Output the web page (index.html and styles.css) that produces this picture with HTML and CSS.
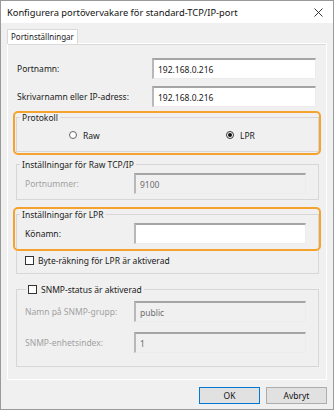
FILE: index.html
```html
<!DOCTYPE html>
<html lang="sv">
<head>
    <meta charset="UTF-8">
    <meta name="viewport" content="width=device-width, initial-scale=1.0">
    <title>Konfigurera portövervakare</title>
    <link rel="stylesheet" href="styles.css">
</head>
<body>
<div class="dialog">
    <div class="titlebar">
        <span class="title">Konfigurera portövervakare för standard-TCP/IP-port</span>
        <svg class="close" width="9" height="9" viewBox="0 0 9 9">
            <path d="M0.5 0.5 L8.5 8.5 M8.5 0.5 L0.5 8.5" stroke="#222" stroke-width="0.9" fill="none"/>
        </svg>
    </div>
    <div class="content">
        <div class="tabs"><div class="tab">Portinställningar</div></div>
        <div class="panel">
            <div class="row">
                <label for="portname">Portnamn:</label>
                <input class="text" id="portname" type="text" value="192.168.0.216">
            </div>
            <div class="row second">
                <label for="address">Skrivarnamn eller IP-adress:</label>
                <input class="text" id="address" type="text" value="192.168.0.216">
            </div>

            <div class="group proto">
                <div class="group-title">Protokoll</div>
                <div class="radios">
                    <label class="radio"><span class="dot"></span>Raw</label>
                    <label class="radio"><span class="dot checked"></span>LPR</label>
                </div>
                <div class="mark mark-proto"></div>
            </div>

            <div class="group raw">
                <div class="group-title">Inställningar för Raw TCP/IP</div>
                <div class="field">
                    <span class="off">Portnummer:</span>
                    <input class="text disabled" type="text" value="9100" disabled>
                </div>
            </div>

            <div class="group lpr">
                <div class="group-title">Inställningar för LPR</div>
                <div class="field">
                    <label for="queue">Könamn:</label>
                    <input class="text" id="queue" type="text" value="">
                </div>
                <label class="check"><span class="box"></span>Byte-räkning för LPR är aktiverad</label>
                <div class="mark mark-lpr"></div>
            </div>

            <div class="group snmp">
                <label class="group-title check-title"><span class="box"></span>SNMP-status är aktiverad</label>
                <div class="field">
                    <span class="off">Namn på SNMP-grupp:</span>
                    <input class="text disabled" type="text" value="public" disabled>
                </div>
                <div class="field next">
                    <span class="off">SNMP-enhetsindex:</span>
                    <input class="text disabled" type="text" value="1" disabled>
                </div>
            </div>
        </div>
        <div class="buttons">
            <button class="btn default">OK</button>
            <button class="btn">Avbryt</button>
        </div>
    </div>
</div>
</body>
</html>
```

FILE: styles.css
```css
/* dialog window */
body {
  margin: 0;
  font-family: "Noto Sans", "Segoe UI", sans-serif;
  font-size: 8.5px;
  color: #1a1a1a;
}

.dialog {
  width: 334px;
  height: 410px;
  box-sizing: border-box;
  border: 1px solid #9a9a9a;
  background-color: #f0f0f0;
  display: flex;
  flex-direction: column;
}

.titlebar {
  height: 22px;
  background-color: #fff;
  display: flex;
  align-items: center;
  justify-content: space-between;
  padding: 0 10px 0 6px;
}

.title {
  font-size: 9.3px;
  color: #111;
}

.close {
  display: block;
}

.content {
  flex: 1;
  padding: 6px 6px 4px 6px;
  display: flex;
  flex-direction: column;
}

/* tabs */
.tabs {
  display: flex;
  height: 15px;
  margin-bottom: -1px;
  position: relative;
  z-index: 1;
}

.tab {
  background-color: #fff;
  border: 1px solid #d9d9d9;
  border-bottom: none;
  padding: 0 3px;
  line-height: 14px;
  font-size: 8px;
}

.panel {
  height: 337px;
  box-sizing: border-box;
  border: 1px solid #fff;
  box-shadow: inset 0 1px 0 #d9d9d9;
  padding: 14px 7px 0 8px;
}

/* top rows */
.row {
  display: flex;
  align-items: center;
  justify-content: space-between;
  padding: 0 3px 0 1px;
  height: 21px;
}

.row.second {
  margin-top: 7px;
}

input.text {
  box-sizing: border-box;
  height: 21px;
  width: 164px;
  margin: 0;
  padding: 0 4px;
  font-family: inherit;
  font-size: 8.5px;
  color: #1a1a1a;
  background-color: #fff;
  border-top: 2px solid #a5a5a5;
  border-left: 2px solid #b8b8b8;
  border-right: 1px solid #ececec;
  border-bottom: 1px solid #ececec;
  outline: none;
}

.field input.text {
  width: 172px;
}

input.text.disabled {
  background-color: #f0f0f0;
  color: #6d6d6d;
}

/* group boxes */
.group {
  position: relative;
  border: 1px solid #d7d7d7;
  padding: 0 7px 0 8px;
}

.group-title {
  display: flex;
  align-items: center;
  width: max-content;
  height: 13px;
  margin: -7px 0 0 -5px;
  padding: 0 2px;
  background-color: #f0f0f0;
}

.proto {
  margin-top: 10px;
  height: 35px;
  box-sizing: border-box;
}

.raw {
  margin-top: 12px;
  height: 36px;
  box-sizing: border-box;
}

.lpr {
  margin-top: 14px;
  height: 60px;
  box-sizing: border-box;
}

.snmp {
  margin-top: 15px;
  height: 78px;
  box-sizing: border-box;
}

.field {
  display: flex;
  align-items: center;
  justify-content: space-between;
  padding: 0 5px 0 0;
  margin-top: 2px;
}

.snmp .field {
  margin-top: 5px;
}

.snmp .field.next {
  margin-top: 10px;
}

.off {
  color: #a2a2a2;
}

/* radios and checkboxes */
.radios {
  display: grid;
  grid-template-columns: 157px 1fr;
  padding-left: 44px;
  margin-top: 4px;
  height: 14px;
  align-items: center;
}

.radio {
  display: flex;
  align-items: center;
  gap: 6px;
}

.dot {
  width: 6px;
  height: 6px;
  border: 1px solid #666;
  border-radius: 50%;
  background-color: #fff;
  display: flex;
  align-items: center;
  justify-content: center;
}

.dot.checked {
  border-color: #333;
}

.dot.checked::after {
  content: "";
  width: 4px;
  height: 4px;
  border-radius: 50%;
  background-color: #111;
}

.check {
  display: flex;
  align-items: center;
  gap: 4px;
  margin-top: 9px;
  height: 14px;
}

.box {
  width: 7px;
  height: 7px;
  border: 1px solid #333;
  background-color: #fff;
}

.check-title {
  gap: 4px;
  margin-left: 1px;
}

/* orange highlight marks */
.mark {
  position: absolute;
  border: 2px solid #f6a22f;
  border-radius: 5px;
  pointer-events: none;
}

.mark-proto {
  left: -4px;
  right: -3px;
  top: -7px;
  bottom: -4px;
}

.mark-lpr {
  left: -4px;
  right: -3px;
  top: -8px;
  height: 40px;
}

/* buttons */
.buttons {
  display: flex;
  justify-content: flex-end;
  gap: 6px;
  margin-top: 7px;
}

.btn {
  width: 61px;
  height: 17px;
  padding: 0;
  font-family: inherit;
  font-size: 8.5px;
  color: #111;
  background-color: #e1e1e1;
  border: 1px solid #adadad;
}

.btn.default {
  border-color: #0078d7;
}
```
